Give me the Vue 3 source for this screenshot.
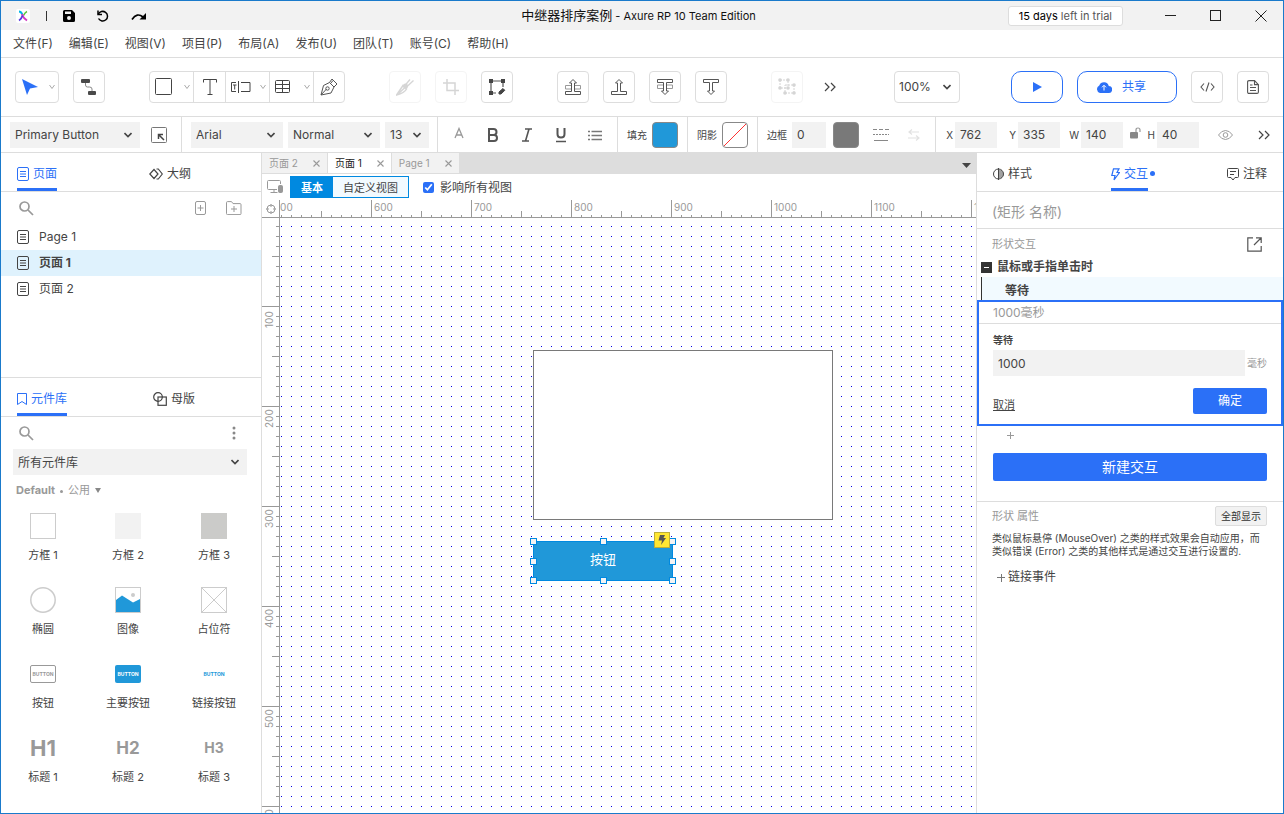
<script setup>
import { computed, onBeforeUnmount, onMounted, ref } from 'vue'

const menus = [
  ['文件', 'F'], ['编辑', 'E'], ['视图', 'V'], ['项目', 'P'], ['布局', 'A'],
  ['发布', 'U'], ['团队', 'T'], ['账号', 'C'], ['帮助', 'H'],
]
const pages = [
  { name: 'Page 1', active: false },
  { name: '页面 1', active: true },
  { name: '页面 2', active: false },
]
const docTabs = [
  { name: '页面 2', active: false },
  { name: '页面 1', active: true },
  { name: 'Page 1', active: false },
]
const widgets = [
  { kind: 'box1', name: '方框 1' }, { kind: 'box2', name: '方框 2' }, { kind: 'box3', name: '方框 3' },
  { kind: 'ellipse', name: '椭圆' }, { kind: 'image', name: '图像' }, { kind: 'placeholder', name: '占位符' },
  { kind: 'button', name: '按钮' }, { kind: 'primary', name: '主要按钮' }, { kind: 'link', name: '链接按钮' },
  { kind: 'h1', name: '标题 1' }, { kind: 'h2', name: '标题 2' }, { kind: 'h3', name: '标题 3' },
]
const geometry = ref({ x: '762', y: '335', w: '140', h: '40' })
const borderWidth = ref('0')
const waitMs = ref('1000')
const affectAll = ref(true)

// The rulers cover the visible canvas; its top left corner is page point (509, 12).
const canvas = ref(null)
const view = ref({ width: 0, height: 0 })
const origin = { x: 509, y: 12 }
let observer
onMounted(() => {
  const measure = () => {
    view.value = { width: canvas.value.clientWidth, height: canvas.value.clientHeight }
  }
  measure()
  observer = new ResizeObserver(measure)
  observer.observe(canvas.value)
})
onBeforeUnmount(() => observer?.disconnect())

const steps = (start, length, step) => {
  const out = []
  for (let v = Math.ceil(start / step) * step; v - start < length; v += step) out.push({ value: v, at: v - start })
  return out
}
const sized = (t) => ({ ...t, size: t.value % 100 === 0 ? 18 : t.value % 50 === 0 ? 7 : 3 })
const hTicks = computed(() => steps(origin.x, view.value.width, 10).map(sized))
const vTicks = computed(() => steps(origin.y, view.value.height, 10).map(sized))
const hLabels = computed(() => [{ value: 500, at: 500 - origin.x }, ...steps(origin.x, view.value.width, 100)])
const vLabels = computed(() => steps(origin.y, view.value.height, 100))
const handles = ['nw', 'n', 'ne', 'w', 'e', 'sw', 's', 'se']
</script>

<template>
  <div class="window">
    <header class="titlebar">
      <div class="quick">
        <svg class="logo" width="14" height="14" viewBox="0 0 14 14">
          <rect width="14" height="14" rx="2" fill="#fff" />
          <path d="M3 2.500q2 0 3.500 3" fill="none" stroke="#00b8e6" stroke-width="1.800" />
          <path d="M11 2.500q-2 1-3.500 4" fill="none" stroke="#5cc83b" stroke-width="1.500" />
          <path d="M6 5q1 4 5 6.500" fill="none" stroke="#d13bc4" stroke-width="1.800" />
          <path d="M6.500 6.500Q5.500 10 3 11.500" fill="none" stroke="#5b3be0" stroke-width="1.800" />
        </svg>
        <span class="bar"></span>
        <button class="plain" aria-label="保存"><svg width="12" height="12" viewBox="0 0 12 12"><path fill-rule="evenodd" d="M1.500 0H9l3 3v7.500a1.500 1.500 0 0 1-1.500 1.500h-9A1.500 1.500 0 0 1 0 10.500v-9A1.500 1.500 0 0 1 1.500 0zM2 1.500V4h6V1.500zM6 6a2 2 0 1 0 0 4 2 2 0 0 0 0-4z" fill="#000" /></svg></button>
        <button class="plain undo" aria-label="撤销"><svg width="12" height="12" viewBox="0 0 12 12" fill="none" stroke="#000" stroke-width="1.500"><path d="M1 .5v4h4" /><path d="M1.300 4.300A4.800 4.800 0 1 1 1.500 8.500" /></svg></button>
        <button class="plain" aria-label="重做"><svg width="16" height="8" viewBox="0 0 16 8"><path d="M1 7.500Q6 0 12 5" fill="none" stroke="#000" stroke-width="1.700" /><path d="M15 1v6.500H8.500z" /></svg></button>
      </div>
      <div class="title"><span>中继器排序案例</span> - Axure RP 10 Team Edition</div>
      <div class="system">
        <button class="trial"><b>15 days</b> left in trial</button>
        <button class="plain" aria-label="最小化"><svg width="12" height="12" viewBox="0 0 12 12"><path d="M0 5.500h11" stroke="#222" /></svg></button>
        <button class="plain" aria-label="最大化"><svg width="12" height="12" viewBox="0 0 12 12"><rect x=".5" y=".5" width="10" height="10" fill="none" stroke="#222" /></svg></button>
        <button class="plain" aria-label="关闭"><svg width="12" height="12" viewBox="0 0 12 12"><path d="M.5.5l11 11M11.500.5l-11 11" stroke="#222" /></svg></button>
      </div>
    </header>

    <nav class="menubar">
      <button v-for="m in menus" :key="m[1]" class="plain">{{ m[0] }}<span>({{ m[1] }})</span></button>
    </nav>

    <div class="toolbar">
      <div class="tools">
        <button class="tool wide" aria-label="选择">
          <svg width="18" height="18" viewBox="0 0 18 18"><path d="M1 1l16 8-8 1.500L6 17z" fill="#2b70f7" /></svg>
          <svg class="tiny" width="6" height="6" viewBox="0 0 6 6"><path d="M.5 1L3 4.500 5.500 1" /></svg>
        </button>
        <button class="tool" aria-label="连接"><svg width="18" height="18" viewBox="0 0 18 18"><rect x="1" y="1" width="9" height="4" rx="1" fill="#4a4a4a" /><rect x="8" y="13" width="8" height="4" rx="1" fill="#4a4a4a" /><path d="M5.500 5v2q0 2 2 2h2q2.500 0 2.500 2v2" fill="none" stroke="#888" /></svg></button>
      </div>
      <div class="joined">
        <button class="cell wide" aria-label="矩形"><svg width="18" height="18" viewBox="0 0 18 18"><rect x=".5" y=".5" width="16" height="16" rx="1" fill="none" stroke="#444" /></svg><svg class="tiny" width="6" height="6" viewBox="0 0 6 6"><path d="M.5 1L3 4.500 5.500 1" /></svg></button>
        <button class="cell" aria-label="文本"><svg width="14" height="16" viewBox="0 0 14 16" fill="none" stroke="#444"><path d="M.5 3.500v-3h13v3M7 .5v15M4.500 15.500h5" /></svg></button>
        <button class="cell wide" aria-label="表单"><svg width="20" height="12" viewBox="0 0 20 12" fill="none" stroke="#444"><path d="M5 1.500H.5v9H5M7.500 0v12M10 1.500h9v9h-9" /><path d="M2 4h3.500M3.700 4v4.500" /></svg><svg class="tiny" width="6" height="6" viewBox="0 0 6 6"><path d="M.5 1L3 4.500 5.500 1" /></svg></button>
        <button class="cell wide" aria-label="表格"><svg width="16" height="14" viewBox="0 0 16 14" fill="none" stroke="#444"><rect x=".5" y=".5" width="14" height="12" rx="1" /><path d="M.5 4.500h14M.5 8.500h14M7.500.5v12" /></svg><svg class="tiny" width="6" height="6" viewBox="0 0 6 6"><path d="M.5 1L3 4.500 5.500 1" /></svg></button>
        <button class="cell" aria-label="钢笔"><svg width="18" height="18" viewBox="0 0 18 18" fill="none" stroke="#555"><path d="M1 17l2.500-9.500 6-3 4.500 4.500-3 6zM1 17l5.500-6" /><circle cx="7.500" cy="10.500" r="1.700" /><path d="M9.500 4.500L12 1l5 5-3 3M13 2.500L11 5" /></svg></button>
      </div>
      <div class="tools">
        <button class="tool off" disabled aria-label="切割"><svg width="18" height="18" viewBox="0 0 18 18"><path d="M.5 17L7 7.500l3.500 3.500q-2 4-10 6zM2.500 15.500L9 9.500" fill="none" stroke="#777" stroke-width="1.500" /><path d="M10 9.500l7.500-7M8.500 8L14 1.500" stroke="#777" stroke-width="1.300" /><circle cx="9.500" cy="8" r="2.500" fill="#777" /></svg></button>
        <button class="tool off" disabled aria-label="裁剪"><svg width="16" height="16" viewBox="0 0 16 16" fill="none" stroke="#777" stroke-width="1.500"><path d="M4 0v11.500h12M0 4h12v12" /></svg></button>
        <button class="tool" aria-label="编辑点"><svg width="18" height="18" viewBox="0 0 18 18"><path d="M4 3h10M3 4v10M15 5v4M5 15h3" stroke="#555" stroke-width="1.200" /><path d="M1 1h4v4H1zM13 1h4v4h-4zM1 13h4v4H1z" fill="#444" /><path d="M11 16v-2l4-3.500 1.800 1.800L13 16z" fill="#444" stroke="#444" stroke-linejoin="round" /></svg></button>
      </div>
      <div class="tools">
        <button class="tool" aria-label="置于顶层"><svg width="18" height="18" viewBox="0 0 18 18" fill="none" stroke="#555"><path d="M7 7.500H1.500v3.500h6M11 7.500h5.500v3.500h-6" stroke="#999" /><path d="M1.500 13.500h6V5H5.500L9 1.500 12.500 5h-2v8.500h6v3h-15z" /></svg></button>
        <button class="tool" aria-label="上移一层"><svg width="18" height="18" viewBox="0 0 18 18" fill="none" stroke="#555"><path d="M1.500 13.500h6V5H5.500L9 1.500 12.500 5h-2v8.500h6v3h-15z" /></svg></button>
        <button class="tool" aria-label="置于底层"><svg width="18" height="18" viewBox="0 0 18 18" fill="none" stroke="#555"><path d="M7 10.500H1.500V7h6M11 10.500h5.500V7h-6" stroke="#999" /><path d="M1.500 4.500h6V13H5.500L9 16.500l3.500-3.500h-2V4.500h6v-3h-15z" /></svg></button>
        <button class="tool" aria-label="下移一层"><svg width="18" height="18" viewBox="0 0 18 18" fill="none" stroke="#555"><path d="M1.500 4.500h6V13H5.500L9 16.500l3.500-3.500h-2V4.500h6v-3h-15z" /></svg></button>
      </div>
      <div class="tools more">
        <button class="tool off" disabled aria-label="组合"><svg width="20" height="18" viewBox="0 0 20 18"><path d="M3 2h8v8H3zM8 7h9v8H8z" fill="none" stroke="#777" stroke-dasharray="2 1" /><g fill="#777"><circle cx="3" cy="2" r="1.800" /><circle cx="11" cy="2" r="1.800" /><circle cx="3" cy="10" r="1.800" /><circle cx="11" cy="10" r="1.800" /><circle cx="17" cy="7" r="1.800" /><circle cx="17" cy="15" r="1.800" /><circle cx="8" cy="15" r="1.800" /></g></svg></button>
        <button class="plain" aria-label="更多"><svg width="12" height="10" viewBox="0 0 12 10" fill="none" stroke="#444" stroke-width="1.200"><path d="M1 1l4 4-4 4M7 1l4 4-4 4" /></svg></button>
      </div>
      <div class="tools right">
        <label class="select zoom">
          <select aria-label="缩放"><option>100%</option></select>
          <svg width="8" height="6" viewBox="0 0 8 6"><path d="M.5 1L4 4.500 7.500 1" /></svg>
        </label>
        <button class="pill play" aria-label="预览"><svg width="10" height="12" viewBox="0 0 10 12"><path d="M1 1l9 5-9 5z" fill="#2b70f7" /></svg></button>
        <button class="pill share"><svg width="16" height="12" viewBox="0 0 16 12"><path d="M4 12a4 4 0 0 1-.7-7.500A5 5 0 0 1 12.800 5 3.500 3.500 0 0 1 12.500 12z" fill="#2b70f7" /><path d="M8 9.500v-5M6 6.300l2-2 2 2" fill="none" stroke="#fff" /></svg>共享</button>
        <button class="tool" aria-label="代码"><svg width="15" height="10" viewBox="0 0 15 10" fill="none" stroke="#555" stroke-width="1.100"><path d="M4 1.500L1 5l3 3.500M11 1.500L14 5l-3 3.500M9 .5l-3 9" /></svg></button>
        <button class="tool" aria-label="文档"><svg width="12" height="14" viewBox="0 0 12 14" fill="none" stroke="#555" stroke-width="1.100"><path d="M2 .6h5.500l3.900 4V12q0 1.400-1.400 1.400H2Q.6 13.400.6 12V2Q.6.6 2 .6z" /><path d="M7.500.6v4h3.900" /><path d="M3 5h2.500M3 7.500h6M3 10.500h6" /></svg></button>
      </div>
    </div>

    <div class="format">
      <div class="fgroup">
        <label class="select w130"><select aria-label="样式"><option>Primary Button</option></select><svg width="8" height="6" viewBox="0 0 8 6"><path d="M.5 1L4 4.500 7.500 1" /></svg></label>
        <button class="plain stylebtn" aria-label="更新样式"><svg width="16" height="16" viewBox="0 0 16 16" fill="none" stroke="#777"><rect x=".5" y=".5" width="15" height="15" rx="1" /><path d="M7.500 12V7.500H12M8 8l5 5" stroke="#444" stroke-width="1.500" /></svg></button>
      </div>
      <div class="fgroup fonts">
        <label class="select w92"><select aria-label="字体"><option>Arial</option></select><svg width="8" height="6" viewBox="0 0 8 6"><path d="M.5 1L4 4.500 7.500 1" /></svg></label>
        <label class="select w92"><select aria-label="字重"><option>Normal</option></select><svg width="8" height="6" viewBox="0 0 8 6"><path d="M.5 1L4 4.500 7.500 1" /></svg></label>
        <label class="select w44"><select aria-label="字号"><option>13</option></select><svg width="8" height="6" viewBox="0 0 8 6"><path d="M.5 1L4 4.500 7.500 1" /></svg></label>
      </div>
      <div class="fgroup marks">
        <button class="plain" aria-label="文字颜色"><svg width="14" height="16" viewBox="0 0 14 16" fill="none" stroke="#999" stroke-width="1.300"><path d="M3 11L7 1.500 11 11M4.500 8h5" /></svg></button>
        <button class="plain" aria-label="粗体"><svg width="14" height="16" viewBox="0 0 14 16" fill="none" stroke="#555" stroke-width="2"><path d="M3 2h4.500q3 0 3 3t-3 3H3zM3 8h5q3 0 3 3t-3 3H3z" /></svg></button>
        <button class="plain" aria-label="斜体"><svg width="14" height="16" viewBox="0 0 14 16" fill="none" stroke="#555" stroke-width="1.600"><path d="M5 2h7M2 14h7M9 2L5.500 14" /></svg></button>
        <button class="plain" aria-label="下划线"><svg width="14" height="16" viewBox="0 0 14 16" fill="none" stroke="#555" stroke-width="2"><path d="M3.500 1v6q0 3.500 3.500 3.500t3.500-3.500V1" /><path d="M2 14.500h10" stroke-width="1.500" /></svg></button>
        <button class="plain" aria-label="列表"><svg width="14" height="16" viewBox="0 0 14 16" stroke="#777" stroke-width="1.300"><path d="M3.500 4.500H14M3.500 8.500H14M3.500 12.500H14M0 4.500h2M0 8.500h2M0 12.500h2" /></svg></button>
      </div>
      <div class="fgroup paint"><span>填充</span><button class="swatch fill" aria-label="填充"></button></div>
      <div class="fgroup paint"><span>阴影</span><button class="swatch none" aria-label="阴影"><svg width="24" height="24" viewBox="0 0 24 24"><path d="M1 23L23 1" stroke="#f33" /></svg></button></div>
      <div class="fgroup border">
        <label for="bw">边框</label><input id="bw" v-model="borderWidth" class="num w34">
        <button class="swatch grey" aria-label="边框颜色"></button>
        <button class="plain" aria-label="线型"><svg width="16" height="12" viewBox="0 0 16 12" stroke="#888"><path d="M0 .5h16" stroke-dasharray="4 2" /><path d="M0 5.500h16" stroke-dasharray="2 1" /><path d="M1 11.500h14" /></svg></button>
        <button class="plain arrows" disabled aria-label="箭头"><svg width="14" height="12" viewBox="0 0 14 12" fill="none" stroke="#e2e2e2" stroke-width="1.200"><path d="M12 3H2M5 .5L2 3l3 2.500M1 9h11M9 6.500L12 9l-3 2.500" /></svg></button>
      </div>
      <div class="fgroup geo">
        <label for="gx">X</label><input id="gx" v-model="geometry.x" class="num">
        <label for="gy">Y</label><input id="gy" v-model="geometry.y" class="num">
        <label for="gw">W</label><input id="gw" v-model="geometry.w" class="num">
        <button class="plain lock" aria-label="锁定比例"><svg width="11" height="12" viewBox="0 0 11 12"><rect y="5" width="8" height="6.500" rx="1" fill="#888" /><path d="M6 5V3q0-2 2-2t2 2v2" fill="none" stroke="#999" stroke-width="1.200" /></svg></button>
        <label class="h" for="gh">H</label><input id="gh" v-model="geometry.h" class="num">
      </div>
      <div class="ends">
        <button class="plain" aria-label="可见性"><svg width="15" height="10" viewBox="0 0 15 10" fill="none" stroke="#999"><path d="M.5 5Q3.500.5 7.500.5T14.500 5q-3 4.500-7 4.500T.5 5z" /><circle cx="7.500" cy="5" r="2.300" /></svg></button>
        <button class="plain" aria-label="更多格式"><svg width="12" height="10" viewBox="0 0 12 10" fill="none" stroke="#444" stroke-width="1.200"><path d="M1 1l4 4-4 4M7 1l4 4-4 4" /></svg></button>
      </div>
    </div>

    <main class="body">
      <aside class="left">
        <section class="pages">
          <div class="tabs">
            <button class="tab on"><svg width="12" height="14" viewBox="0 0 12 14" fill="none" stroke="currentColor"><rect x=".5" y=".5" width="11" height="13" rx="1.500" /><path d="M3 4.500h6M3 7h6M3 9.500h6" /></svg>页面</button>
            <button class="tab outline"><svg width="14" height="12" viewBox="0 0 14 12" fill="none" stroke="currentColor" stroke-width="1.200"><path d="M5 1.500L.8 6 5 10.500 9 6zM7.500 1h1.800L13.300 6l-4 5H7.500" /></svg>大纲</button>
          </div>
          <div class="search">
            <button class="plain" aria-label="搜索页面"><svg width="15" height="15" viewBox="0 0 15 15" fill="none" stroke="#999" stroke-width="1.700"><circle cx="5.500" cy="5.500" r="4.500" /><path d="M9 9l5 5" /></svg></button>
            <span class="grow"></span>
            <button class="plain" aria-label="添加页面"><svg width="12" height="14" viewBox="0 0 12 14" fill="none" stroke="#999"><rect x=".5" y=".5" width="10" height="13" rx="1.500" /><path d="M5.500 4v6M2.500 7h6" /></svg></button>
            <button class="plain folder" aria-label="添加文件夹"><svg width="16" height="14" viewBox="0 0 16 14" fill="none" stroke="#999"><path d="M1.500.6h4L7 2.600h7q1 0 1 1v9q0 1-1 1H1.500q-1 0-1-1v-11q0-1 1-1zM8 5v6M5 8h6" /></svg></button>
          </div>
          <ul class="tree">
            <li v-for="p in pages" :key="p.name" :class="{ active: p.active }">
              <svg width="12" height="14" viewBox="0 0 12 14" fill="none" stroke="#444"><rect x=".5" y=".5" width="11" height="13" rx="1.500" /><path d="M3 4.500h6M3 7h6M3 9.500h6" /></svg>{{ p.name }}
            </li>
          </ul>
        </section>
        <section class="library">
          <div class="tabs">
            <button class="tab on"><svg width="10" height="12" viewBox="0 0 10 12" fill="none" stroke="currentColor"><path d="M.5.5h9v11L5 8.500.5 11.500z" /></svg>元件库</button>
            <button class="tab masters"><svg width="14" height="14" viewBox="0 0 14 14" fill="none" stroke="currentColor" stroke-width="1.200"><circle cx="5" cy="5" r="4.300" /><rect x="5" y="5" width="8.300" height="8.300" /></svg>母版</button>
          </div>
          <div class="search">
            <button class="plain" aria-label="搜索元件"><svg width="15" height="15" viewBox="0 0 15 15" fill="none" stroke="#999" stroke-width="1.700"><circle cx="5.500" cy="5.500" r="4.500" /><path d="M9 9l5 5" /></svg></button>
            <span class="grow"></span>
            <button class="plain dots" aria-label="选项"><svg width="4" height="14" viewBox="0 0 4 14" fill="#888"><circle cx="2" cy="2" r="1.500" /><circle cx="2" cy="7" r="1.500" /><circle cx="2" cy="12" r="1.500" /></svg></button>
          </div>
          <label class="select lib"><select aria-label="元件库"><option>所有元件库</option></select><svg width="8" height="6" viewBox="0 0 8 6"><path d="M.5 1L4 4.500 7.500 1" /></svg></label>
          <div class="cat"><b>Default</b><i></i>公用<svg width="6" height="5" viewBox="0 0 6 5"><path d="M0 0h6L3 5z" fill="#888" /></svg></div>
          <div class="grid">
            <div v-for="w in widgets" :key="w.kind" class="widget">
              <div class="thumb">
                <svg v-if="w.kind === 'ellipse'" width="26" height="26" viewBox="0 0 26 26"><circle cx="13" cy="13" r="12.200" fill="none" stroke="#ccc" stroke-width="1.500" /></svg>
                <svg v-else-if="w.kind === 'image'" width="26" height="26" viewBox="0 0 26 26"><rect x=".5" y=".5" width="25" height="25" fill="#fff" stroke="#ccc" /><path d="M1 13l6-4.500 11 7L25 12v13H1z" fill="#2098d9" /><circle cx="18" cy="8" r="2" fill="#ccc" /></svg>
                <svg v-else-if="w.kind === 'placeholder'" width="26" height="26" viewBox="0 0 26 26" fill="none" stroke="#ccc"><rect x=".5" y=".5" width="25" height="25" /><path d="M1 1l24 24M25 1L1 25" /></svg>
                <span v-else-if="['button', 'primary', 'link'].includes(w.kind)" class="mini" :class="w.kind">BUTTON</span>
                <span v-else-if="w.kind[0] === 'h'" class="heading" :class="w.kind">{{ w.kind.toUpperCase() }}</span>
                <span v-else class="box" :class="w.kind"></span>
              </div>
              <span class="caption">{{ w.name }}</span>
            </div>
          </div>
        </section>
      </aside>

      <section class="center">
        <div class="doctabs">
          <div v-for="t in docTabs" :key="t.name" class="doctab" :class="{ on: t.active }">
            <button class="plain">{{ t.name }}</button>
            <button class="plain" aria-label="关闭标签"><svg width="7" height="7" viewBox="0 0 7 7"><path d="M.5.5l6 6M6.500.5l-6 6" stroke="#999" stroke-width="1.100" /></svg></button>
          </div>
          <button class="plain drop" aria-label="所有标签"><svg width="9" height="5" viewBox="0 0 9 5"><path d="M0 0h9L4.500 5z" fill="#444" /></svg></button>
        </div>
        <div class="views">
          <svg width="17" height="14" viewBox="0 0 17 14" fill="none" stroke="#999"><path d="M10 9.500H1.500q-1 0-1-1v-7q0-1 1-1h11q1 0 1 1V4M7 9.500v3M3.500 12.500h7" /><rect x="11.500" y="5.500" width="4" height="7" rx="1" fill="#999" /></svg>
          <div class="switch"><button class="on">基本</button><button>自定义视图</button></div>
          <label class="all"><input v-model="affectAll" type="checkbox"><span>影响所有视图</span></label>
        </div>
        <div class="stage">
          <div class="corner"><svg width="10" height="10" viewBox="0 0 10 10" fill="none" stroke="#999"><circle cx="5" cy="5" r="4" /><path d="M5 0v3M5 7v3M0 5h3M7 5h3" /></svg></div>
          <svg class="hruler">
            <rect v-for="t in hTicks" :key="t.value" :x="t.at" :y="18 - t.size" width="1" :height="t.size" />
            <text v-for="l in hLabels" :key="l.value" :x="l.at + 3" y="11">{{ l.value }}</text>
          </svg>
          <svg class="vruler">
            <rect v-for="t in vTicks" :key="t.value" :x="17 - t.size" :y="t.at" :width="t.size" height="1" />
            <g v-for="l in vLabels" :key="l.value" :transform="`translate(11 ${l.at + 22}) rotate(-90)`"><text>{{ l.value }}</text></g>
          </svg>
          <div ref="canvas" class="canvas">
            <svg class="dotgrid" width="100%" height="100%">
              <defs><pattern id="dots" x="1" y="8" width="10" height="10" patternUnits="userSpaceOnUse"><rect width="1" height="1" fill="#0000e6" /></pattern></defs>
              <rect width="100%" height="100%" fill="url(#dots)" />
            </svg>
            <div class="shape"></div>
            <div class="node">
              按钮
              <span v-for="h in handles" :key="h" class="handle" :class="h"></span>
              <span class="bolt"><svg width="8" height="10" viewBox="0 0 8 10"><path d="M2 0h5L5.500 3H8L3 10l1-4.500H.5z" fill="#555" /></svg></span>
            </div>
          </div>
        </div>
      </section>

      <aside class="inspector">
        <div class="tabs">
          <button class="tab"><svg width="11" height="12" viewBox="0 0 11 12" fill="none" stroke="currentColor"><circle cx="5.500" cy="6" r="5" /><path d="M5.500 0v12M6 3h3M6 5h4.500M6 7h4.500M6 9h3" /></svg>样式</button>
          <button class="tab on"><svg width="9" height="13" viewBox="0 0 9 13" fill="none" stroke="currentColor" stroke-width="1.200"><path d="M2.500.8H8L6 4.500h2.500L3 12l1-4.500H.8z" /></svg>交互<i></i></button>
          <button class="tab"><svg width="12" height="13" viewBox="0 0 12 13" fill="none" stroke="currentColor"><path d="M1.500.5h9q1 0 1 1v7q0 1-1 1H8l-2 2.500-2-2.500H1.500q-1 0-1-1v-7q0-1 1-1zM3 3.500h6M3 6.500h4" /></svg>注释</button>
        </div>
        <input class="name" placeholder="(矩形 名称)" aria-label="名称">
        <div class="head">
          <span>形状交互</span>
          <button class="plain" aria-label="在窗口中打开"><svg width="15" height="15" viewBox="0 0 15 15" fill="none" stroke="#555" stroke-width="1.200"><path d="M6 .8H.8v13.400h13.400V9M9 .8h5.200V6M14 1L7 8" /></svg></button>
        </div>
        <div class="event"><svg width="11" height="11" viewBox="0 0 11 11"><rect width="11" height="11" fill="#333" /><path d="M3 5.500h5" stroke="#fff" /></svg>鼠标或手指单击时</div>
        <div class="action">等待</div>
        <form class="editor" @submit.prevent>
          <div class="summary">1000毫秒</div>
          <div class="fields">
            <label for="wait">等待</label>
            <div class="line"><input id="wait" v-model="waitMs"><span>毫秒</span></div>
            <div class="line foot"><a href="#">取消</a><button class="ok">确定</button></div>
          </div>
        </form>
        <button class="plain plus" aria-label="添加动作"><svg width="7" height="7" viewBox="0 0 7 7"><path d="M3.500 0v7M0 3.500h7" stroke="#999" /></svg></button>
        <button class="new">新建交互</button>
        <section class="props">
          <div class="phead"><span>形状 属性</span><button>全部显示</button></div>
          <p>类似鼠标悬停 (MouseOver) 之类的样式效果会自动应用，而类似错误 (Error) 之类的其他样式是通过交互进行设置的.</p>
          <button class="plain linkev"><svg width="9" height="9" viewBox="0 0 9 9"><path d="M4.500 1v8M0 4.500h8" stroke="#777" /></svg>链接事件</button>
        </section>
      </aside>
    </main>
  </div>
</template>

<style>
body { margin: 0; }
</style>

<style scoped>
* { box-sizing: border-box; }
.window {
  --line: #ddd;
  --blue: #2b70f7;
  height: 100vh;
  display: flex;
  flex-direction: column;
  border: 1px solid #1a7acb;
  background: #fff;
  color: #444;
  font: 12px/16px Inter, "Noto Sans CJK SC", sans-serif;
  overflow: hidden;
}
button, input, select { font: inherit; color: inherit; margin: 0; }
svg { display: block; flex: none; }
.plain { border: 0; background: none; padding: 0; display: flex; align-items: center; white-space: nowrap; }
.grow { flex: 1; }

.titlebar { display: grid; grid-template-columns: 1fr auto 1fr; align-items: center; height: 29px; flex: none; background: #f2f2f2; }
.quick { display: flex; align-items: center; padding-left: 15px; gap: 22px; }
.logo { margin-right: -6px; }
.bar { width: 1px; height: 10px; background: #333; margin-right: -6px; }
.title { padding-right: 7px; font-size: 11px; line-height: 16px; color: #111; }
.title span { font-size: 13px; }
.system { display: flex; align-items: center; justify-content: flex-end; gap: 33px; padding-right: 16px; }
.trial { height: 20px; padding: 0 10px; margin-right: 9px; border: 1px solid #ddd; border-radius: 3px; background: #fff; font-size: 11px; line-height: 16px; white-space: nowrap; color: #555; }
.trial b { font-weight: 400; color: #000; }

.menubar { display: flex; gap: 16px; height: 28px; flex: none; padding-left: 12px; border-bottom: 1px solid var(--line); }

.toolbar { display: flex; align-items: center; gap: 44px; height: 59px; flex: none; padding: 0 14px; border-bottom: 1px solid var(--line); }
.tools { display: flex; align-items: center; gap: 14px; }
.tools.more { gap: 21px; }
.tools.right { margin-left: auto; }
.tool, .joined, .pill, .zoom { height: 32px; border: 1px solid var(--line); border-radius: 4px; background: #fff; }
.tool { width: 32px; display: flex; align-items: center; justify-content: center; padding: 0; }
.wide.tool, .wide.cell { width: 44px; justify-content: space-between; padding: 0 3px 0 5px; }
.tool.off { opacity: .3; }
.joined { display: flex; }
.cell { width: 32px; border: 0; background: none; display: flex; align-items: center; justify-content: center; padding: 0; }
.cell + .cell { border-left: 1px solid var(--line); }
.wide.cell:first-child { width: 43px; }
.cell:last-child { width: 31px; }
.tiny { fill: none; stroke: #aaa; }
.pill { display: flex; align-items: center; justify-content: center; border-color: var(--blue); border-radius: 10px; color: var(--blue); }
.play { width: 52px; }
.share { width: 100px; gap: 10px; padding: 0 12px 0 0; }

.select { display: grid; align-items: center; height: 26px; background: #f2f2f2; }
.select select { grid-area: 1 / 1; appearance: none; border: 0; background: none; width: 100%; height: 100%; padding: 0 20px 0 5px; outline: 0; }
.select svg { grid-area: 1 / 1; justify-self: end; margin-right: 8px; fill: none; stroke: #444; stroke-width: 1.600px; pointer-events: none; }
.select.zoom { width: 66px; height: 32px; background: #fff; margin-right: 37px; }
.select.zoom select { padding-left: 4px; }
.w130 { width: 130px; }
.w92 { width: 92px; }
.w44 { width: 44px; }

.format { display: flex; height: 36px; flex: none; border-bottom: 1px solid var(--line); }
.fgroup { display: flex; align-items: center; gap: 5px; padding: 0 9px; border-right: 1px solid var(--line); font-size: 10px; }
.fgroup .select, .num { font-size: 12px; }
.stylebtn { margin: 0 5px 0 6px; }
.fonts { padding-right: 8px; }
.marks { gap: 20px; padding: 0 15px 0 14px; }
.swatch { width: 26px; height: 26px; padding: 0; border: 1px solid #888; border-radius: 4px; background: #fff; }
.swatch.fill { background: #2098d9; }
.swatch.grey { background: #797979; margin: 0 9px 0 2px; }
.num { width: 42px; height: 26px; border: 0; background: #f2f2f2; padding: 0 5px; outline: 0; }
.num.w34 { width: 34px; }
.border { padding-right: 14px; }
.arrows { margin-left: 13px; }
.geo { gap: 2px; padding: 0; border-right: 0; }
.geo label { width: 17px; text-align: right; }
.geo label.h { width: 12px; }
.lock { margin: 0 0 4px 5px; }
.ends { display: flex; align-items: center; justify-content: flex-end; gap: 25px; flex: 1; padding-right: 13px; }

.body { display: grid; grid-template-columns: 261px 1fr 307px; flex: 1; min-height: 0; }
.left { display: flex; flex-direction: column; border-right: 1px solid var(--line); min-height: 0; }
.pages { height: 225px; border-bottom: 1px solid var(--line); flex: none; }
.tabs { display: flex; height: 39px; padding: 0 16px; border-bottom: 1px solid var(--line); }
.tab { position: relative; display: flex; align-items: center; gap: 4px; height: 38px; padding: 9px 0 2px; border: 0; border-bottom: 3px solid transparent; background: none; white-space: nowrap; }
.tab.on { color: var(--blue); border-bottom-color: var(--blue); }
.outline { margin-left: 92px; }
.masters { margin-left: 86px; }
.search { display: flex; align-items: center; height: 32px; padding: 0 19px 0 18px; }
.folder { margin-left: 19px; }
.dots { margin-right: 6px; }
.tree { list-style: none; margin: 0; padding: 0; }
.tree li { display: flex; align-items: center; gap: 10px; height: 26px; padding-left: 16px; }
.tree .active { background: #dff2fd; font-weight: 700; }
.lib { margin: 0 14px 0 12px; }
.lib select { padding-top: 2px; }
.cat { display: flex; align-items: center; height: 30px; padding-left: 15px; font-size: 11px; color: #999; }
.cat i { width: 3px; height: 3px; margin: 2px 5px 0; border-radius: 50%; background: #999; }
.cat svg { margin-left: 5px; }
.grid { display: grid; grid-template-columns: 84px 86px 86px; padding-top: 8px; }
.widget { display: flex; flex-direction: column; align-items: center; height: 74px; gap: 8px; }
.thumb { display: flex; align-items: center; justify-content: center; height: 26px; }
.caption { font-size: 11px; }
.box { width: 26px; height: 26px; }
.box1 { border: 1px solid #ccc; }
.box2 { background: #f2f2f2; }
.box3 { background: #cbcbc9; }
.mini { display: flex; align-items: center; justify-content: center; width: 26px; height: 18px; border-radius: 2px; font-size: 5px; font-weight: 700; line-height: 6px; }
.mini.button { border: 1px solid #999; color: #999; }
.mini.primary { background: #2098d9; color: #fff; }
.mini.link { color: #2098d9; }
.heading { color: #999; font-weight: 700; }
.heading.h1 { font-size: 22px; }
.heading.h2 { font-size: 17px; }
.heading.h3 { font-size: 14px; }

.center { display: flex; flex-direction: column; min-width: 0; min-height: 0; }
.doctabs { display: flex; height: 21px; flex: none; background: #ddd; border-bottom: 1px solid #ddd; }
.doctab { display: flex; align-items: center; gap: 15px; padding: 0 7px; border-right: 1px solid #ddd; background: #f2f2f2; color: #999; font-size: 10px; }
.doctab.on { background: #fff; color: #222; }
.drop { margin-left: auto; padding: 4px 5px 0 0; }
.views { display: flex; align-items: center; height: 26px; flex: none; padding-left: 5px; }
.switch { display: flex; margin-left: 6px; border: 1px solid #0089e0; height: 22px; }
.switch button { border: 0; padding: 1px 10px 0; font-size: 11px; line-height: 20px; background: #f2faff; }
.switch .on { background: #0089e0; color: #fff; font-weight: 700; }
.all { display: flex; align-items: center; gap: 6px; margin-left: 14px; padding-top: 1px; }
.all input { width: 11px; height: 11px; margin: 0; accent-color: var(--blue); }
.stage { display: grid; grid-template: 18px 1fr / 18px 1fr; flex: 1; min-height: 0; }
.corner { display: flex; align-items: center; justify-content: center; border-right: 1px solid #999; border-bottom: 1px solid #999; }
.hruler { width: 100%; height: 18px; border-bottom: 1px solid #999; }
.vruler { width: 18px; height: 100%; border-right: 1px solid #999; }
.hruler, .vruler { fill: #999; font-size: 10px; overflow: hidden; }
.canvas { position: relative; overflow: hidden; }
.dotgrid { position: absolute; inset: 0; }
.shape { position: absolute; left: 253px; top: 132px; width: 300px; height: 170px; border: 1px solid #797979; background: #fff; }
.node { position: absolute; left: 253px; top: 323px; width: 140px; height: 40px; border: 1px solid #0089e0; background: #2098d9; color: #fff; font-size: 13px; line-height: 34px; text-align: center; }
.handle { position: absolute; width: 7px; height: 7px; border: 1px solid #0089e0; background: #f4f4f4; }
.nw, .n, .ne { top: -4px; }
.w, .e { top: 16px; }
.sw, .s, .se { bottom: -4px; }
.nw, .w, .sw { left: -4px; }
.n, .s { left: 66px; }
.ne, .e, .se { right: -4px; }
.bolt { position: absolute; right: 2px; top: -10px; width: 16px; height: 16px; border: 1px solid #bcae3c; background: #ffe733; display: flex; align-items: center; justify-content: center; }

.inspector { display: flex; flex-direction: column; border-left: 1px solid var(--line); min-width: 0; }
.inspector .tabs { justify-content: space-between; flex: none; }
.tab i { position: absolute; left: 100%; top: 18px; width: 5px; height: 5px; margin-left: 2px; border-radius: 50%; background: var(--blue); }
.name { height: 37px; padding: 3px 15px 0; border: 0; border-bottom: 1px solid var(--line); font-size: 14px; outline: 0; flex: none; }
.name::placeholder { color: #999; opacity: 1; }
.head { display: flex; align-items: center; justify-content: space-between; height: 28px; padding: 2px 21px 0 15px; font-size: 11px; color: #999; flex: none; }
.event { display: flex; align-items: center; gap: 5px; height: 20px; padding-left: 4px; font-weight: 700; flex: none; }
.action { height: 23px; margin-left: 4px; padding: 6px 0 0 23px; border-left: 1px solid #333; background: #f2faff; font-weight: 700; flex: none; }
.editor { border: 2px solid var(--blue); height: 126px; flex: none; }
.summary { height: 22px; padding: 3px 14px 0; border-bottom: 1px solid #ddd; color: #999; }
.fields { padding: 8px 14px 0; }
.fields label { display: block; font-size: 10px; font-weight: 700; height: 18px; }
.line { display: flex; align-items: center; gap: 2px; color: #999; font-size: 10px; }
.line input { flex: 1; min-width: 0; height: 26px; border: 0; padding: 0 5px; background: #f2f2f2; font-size: 12px; color: #444; outline: 0; }
.foot { justify-content: space-between; padding-top: 12px; }
.foot a { color: #444; font-size: 11px; padding-top: 8px; }
.ok { width: 74px; height: 26px; border: 0; border-radius: 2px; background: var(--blue); color: #fff; font-size: 12px; }
.plus { padding: 6px 0 0 30px; }
.new { height: 28px; margin: 14px 16px 20px; flex: none; border: 0; border-radius: 2px; background: var(--blue); color: #fff; font-size: 14px; }
.props { border-top: 1px solid var(--line); padding: 4px 16px 0 15px; }
.phead { display: flex; align-items: center; justify-content: space-between; font-size: 11px; color: #999; }
.phead button { height: 20px; width: 52px; padding: 0; border: 1px solid #ddd; border-radius: 2px; background: #f2f2f2; color: #333; font-size: 10px; }
.props p { margin: 6px 0 0; font-size: 10px; line-height: 13px; }
.linkev { margin: 11px 0 0 5px; gap: 2px; }
</style>
